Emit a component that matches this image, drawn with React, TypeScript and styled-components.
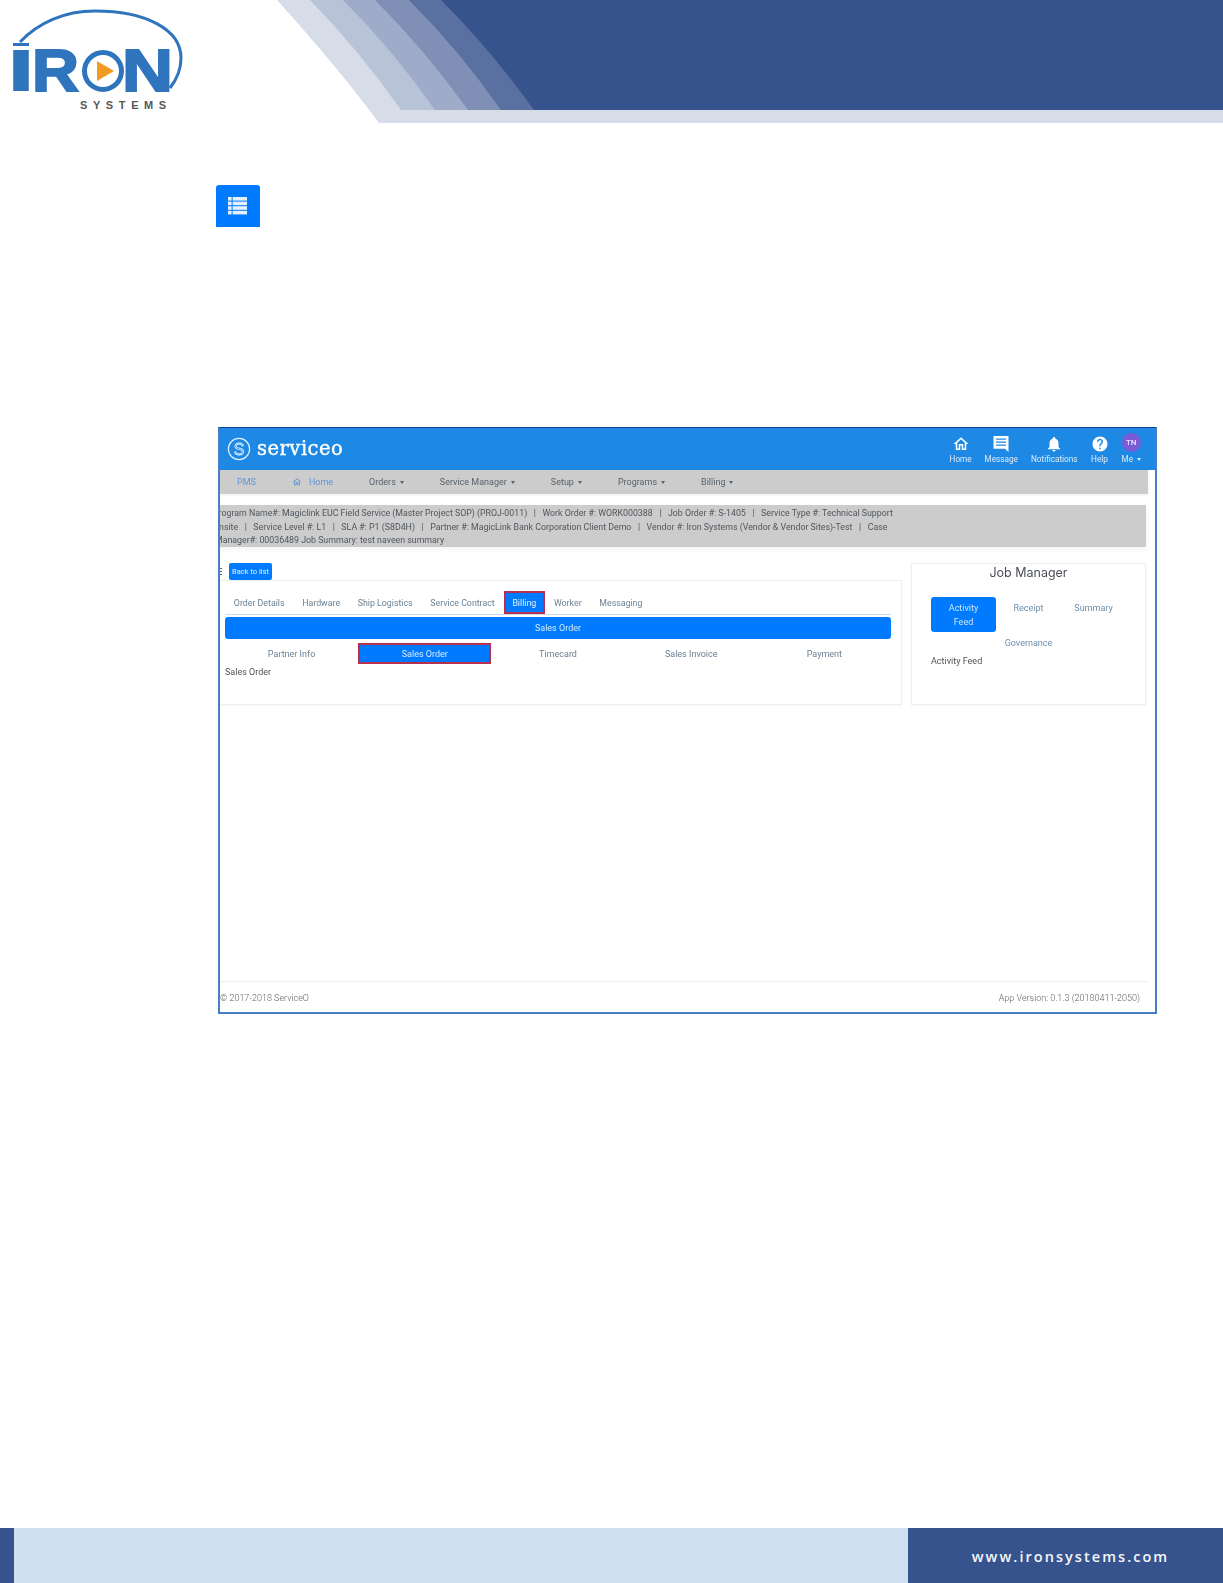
import React, { FC } from 'react';
import styled, { createGlobalStyle } from 'styled-components';
import { MdHelp, MdNotifications, MdOutlineHome } from 'react-icons/md';

const GlobalStyle = createGlobalStyle`
  html, body { margin: 0; padding: 0; background: #fff; }
  body { font-family: Roboto, "Liberation Sans", sans-serif; }
  * { box-sizing: border-box; }
`;

const Page = styled.div`
  width: 1223px;
  height: 1583px;
  display: flex;
  flex-direction: column;
  overflow: hidden;
`;

const Banner = styled.header`
  height: 123px;
  display: flex;
  justify-content: space-between;
  flex: none;
`;

const LogoArt = styled.svg`
  width: 200px;
  height: 123px;
  flex: none;
`;

const Swoosh = styled.svg`
  width: 948px;
  height: 123px;
  flex: none;
`;

const ListButton = styled.button`
  margin: 62px 0 0 216px;
  width: 44px;
  height: 42px;
  flex: none;
  border: none;
  border-radius: 3px 3px 0 0;
  background: #007bff;
  display: flex;
  align-items: center;
  justify-content: center;
  padding: 0 2px 0 0;
`;

const Frame = styled.section`
  margin: 200px 0 0 218px;
  width: 939px;
  height: 587px;
  flex: none;
  display: flex;
  flex-direction: column;
  overflow: hidden;
  border: 2px solid #4a7ec4;
  border-top: 1px solid #1b3f94;
  > * { filter: blur(0.35px); }
`;

const TopBar = styled.div`
  height: 42px;
  flex: none;
  background: #1e88e5;
  display: flex;
  align-items: center;
  justify-content: space-between;
  padding: 0 14px 0 7px;
  color: #fff;
`;

const Brand = styled.div`
  display: flex;
  align-items: center;
  gap: 6px;
`;

const BrandName = styled.span`
  font-family: "DejaVu Serif", "Liberation Serif", serif;
  font-size: 19.5px;
  letter-spacing: 0.5px;
  line-height: 24px;
  -webkit-text-stroke: 0.35px #fff;
`;

const Actions = styled.nav`
  display: flex;
  align-items: flex-end;
  gap: 13px;
`;

const Action = styled.div`
  display: flex;
  flex-direction: column;
  align-items: center;
  font-size: 8.2px;
  line-height: 12px;
  color: #dcecfb;
  white-space: nowrap;
  svg { display: block; color: #fff; }
`;

const Avatar = styled.span`
  width: 19px;
  height: 19px;
  border-radius: 50%;
  background: #7a5bd6;
  color: #e9e4ff;
  font-size: 8px;
  font-weight: 500;
  display: flex;
  align-items: center;
  justify-content: center;
  margin-bottom: 1px;
`;

const Menu = styled.nav`
  height: 24px;
  flex: none;
  margin-right: 7px;
  background: #cccccc;
  display: flex;
  align-items: center;
  gap: 36px;
  padding-left: 17px;
  box-shadow: 0 1px 3px rgba(0, 0, 0, 0.08);
`;

const MenuItem = styled.span<{ $link?: boolean }>`
  display: flex;
  align-items: center;
  gap: 7px;
  font-size: 9px;
  white-space: nowrap;
  color: ${props => (props.$link ? '#5f93d6' : '#59626b')};
`;

const Caret = styled.i`
  display: inline-block;
  margin-left: 4px;
  vertical-align: 1px;
  border-top: 3px solid currentColor;
  border-left: 2.5px solid transparent;
  border-right: 2.5px solid transparent;
`;

const Info = styled.div`
  height: 42px;
  flex: none;
  margin: 11px 9px 0 0;
  padding-top: 2px;
  background: #cccccc;
  overflow: hidden;
  box-shadow: 0 2px 6px rgba(0, 0, 0, 0.05);
`;

const InfoLine = styled.div<{ $shift: number }>`
  height: 13.5px;
  line-height: 13.5px;
  margin-left: ${props => props.$shift}px;
  font-size: 8.8px;
  color: #50575e;
  white-space: pre;
`;

const Workspace = styled.div`
  flex: none;
  height: 142px;
  margin: 16px 9px 0 0;
  display: flex;
  gap: 9px;
`;

const LeftColumn = styled.div`
  flex: 1;
  display: flex;
  flex-direction: column;
`;

const BackRow = styled.div`
  height: 17px;
  flex: none;
  display: flex;
  align-items: center;
  gap: 7px;
`;

const Burger = styled.span`
  width: 2px;
  height: 7px;
  background: repeating-linear-gradient(#5c6b7a 0 1px, transparent 1px 3px);
`;

const BackButton = styled.button`
  width: 43px;
  height: 17px;
  border: none;
  border-radius: 2px;
  background: #007bff;
  color: #eaf3ff;
  font: 400 7.5px Roboto, sans-serif;
  padding: 0;
`;

const Card = styled.div`
  background: #fff;
  border: 1px solid #eeeeee;
  border-left: none;
  box-shadow: 0 1px 3px rgba(0, 0, 0, 0.04);
`;

const OrderCard = styled(Card)`
  flex: 1;
  padding: 10px 10px 0 5px;
`;

const Tabs = styled.div`
  height: 24px;
  display: flex;
  border-bottom: 1px solid #c9dcec;
`;

const Tab = styled.span<{ $active?: boolean }>`
  height: 23px;
  padding: 0 8.85px;
  display: flex;
  align-items: center;
  font-size: 8.8px;
  white-space: nowrap;
  color: ${props => (props.$active ? '#e8f2ff' : '#6c8194')};
  background: ${props => (props.$active ? '#007bff' : 'transparent')};
  outline: ${props => (props.$active ? '2px solid #b9304f' : 'none')};
  outline-offset: -2px;
`;

const SectionBar = styled.div`
  height: 22px;
  margin-top: 2px;
  border-radius: 3px;
  background: #007bff;
  color: #d9eaff;
  font-size: 9px;
  display: flex;
  align-items: center;
  justify-content: center;
`;

const SubTabs = styled.div`
  margin-top: 4px;
  display: grid;
  grid-template-columns: repeat(5, 1fr);
`;

const SubTab = styled.span<{ $active?: boolean }>`
  height: 21px;
  font-size: 9px;
  display: flex;
  align-items: center;
  justify-content: center;
  color: ${props => (props.$active ? '#d9eaff' : '#6c8194')};
  background: ${props => (props.$active ? '#007bff' : 'transparent')};
  outline: ${props => (props.$active ? '2px solid #b9304f' : 'none')};
  outline-offset: -2px;
`;

const PaneText = styled.div`
  margin-top: 1px;
  font-size: 9px;
  line-height: 14px;
  color: #4d5358;
`;

const ManagerCard = styled(Card)`
  width: 235px;
  flex: none;
  border-left: 1px solid #eeeeee;
  padding: 0 19px 0;
`;

const ManagerTitle = styled.h3`
  margin: 0;
  font: 400 12.5px/17px Inter, "Open Sans", sans-serif;
  color: #4a4f55;
  text-align: center;
`;

const Pills = styled.div`
  margin-top: 16px;
  width: 195px;
  display: flex;
  flex-wrap: wrap;
  justify-content: center;
  row-gap: 0;
`;

const Pill = styled.span<{ $active?: boolean }>`
  width: 65px;
  padding: 4px 8px 3px;
  border-radius: 3px;
  font-size: 9px;
  line-height: 14px;
  text-align: center;
  color: ${props => (props.$active ? '#cfe4ff' : '#6c8fae')};
  background: ${props => (props.$active ? '#007bff' : 'transparent')};
`;

const WidePill = styled(Pill)`
  width: auto;
`;

const Foot = styled.footer`
  margin: auto 7px 0 0;
  height: 31px;
  flex: none;
  border-top: 1px solid #f0f0f0;
  display: flex;
  align-items: center;
  justify-content: space-between;
  padding: 2px 8px 0 0;
  font-size: 9px;
  font-weight: 300;
  color: #5e6468;
`;

const BottomStrip = styled.footer`
  margin-top: auto;
  height: 55px;
  flex: none;
  display: grid;
  grid-template-columns: 14px 1fr 315px;
`;

const StripEdge = styled.div`
  background: #36538d;
`;

const StripMiddle = styled.div`
  background: #cfe0f0;
`;

const StripSite = styled.div`
  background: #36538d;
  color: #f4f7fc;
  font: 600 14.5px "Open Sans", sans-serif;
  letter-spacing: 2.05px;
  display: flex;
  align-items: center;
  justify-content: center;
  padding: 2px 0 0 10px;
`;

const IronLogo: FC = () => (
  <LogoArt viewBox="0 0 200 123">
    <path d="M20 42C38 23 64 11 95 11c50 0 86 18 86 47 0 11-4 21-11 30" fill="none" stroke="#2f75bd" strokeWidth="3" />
    <rect x="13" y="43" width="16" height="3" fill="#2f75bd" />
    <g fill="#2f75bd" stroke="#2f75bd" fontFamily="Liberation Sans" fontWeight="700" fontSize="60">
      <text x="6" y="91" textLength="30" lengthAdjust="spacingAndGlyphs" stroke="none">I</text>
      <text x="32" y="91" strokeWidth="2" textLength="47" lengthAdjust="spacingAndGlyphs">R</text>
      <text x="122" y="91" strokeWidth="2" textLength="51" lengthAdjust="spacingAndGlyphs">N</text>
    </g>
    <circle cx="103" cy="71" r="18.5" fill="none" stroke="#2f75bd" strokeWidth="5" />
    <polygon points="97,61 114,71 97,81" fill="#f39a22" />
    <text x="80" y="109" fontFamily="Liberation Sans" fontWeight="700" fontSize="11" letterSpacing="5.6" fill="#55575a">SYSTEMS</text>
  </LogoArt>
);

const bands: { color: string; d: string }[] = [
  { color: '#d6dce8', d: 'M2 0Q65 70 104 123H948V0Z' },
  { color: '#b8c3d8', d: 'M35 0Q84 50 126 110H948V0Z' },
  { color: '#9eabc9', d: 'M68 0Q118 50 160 110H948V0Z' },
  { color: '#7f8fb6', d: 'M100 0Q150 50 193 110H948V0Z' },
  { color: '#5a70a0', d: 'M134 0Q184 50 226 110H948V0Z' },
  { color: '#36538d', d: 'M166 0Q216 50 259 110H948V0Z' },
];

const BannerArt: FC = () => (
  <Swoosh viewBox="0 0 948 123">
    {bands.map(band => (
      <path key={band.color} d={band.d} fill={band.color} />
    ))}
  </Swoosh>
);

const ServiceoMark: FC = () => (
  <svg width="24" height="24" viewBox="0 0 24 24">
    <circle cx="12" cy="12" r="10.6" fill="none" stroke="#dff0ff" strokeWidth="1.2" />
    <text x="12" y="17.5" textAnchor="middle" fontFamily="Liberation Sans" fontSize="16" fill="none" stroke="#dff0ff" strokeWidth="0.8">S</text>
  </svg>
);

const TableIcon: FC = () => (
  <svg width="19" height="18" viewBox="0 0 19 18" fill="#e6f1ff">
    {[0, 4.6, 9.2, 13.8].map(top => (
      <g key={top}>
        <rect y={top} width="3.6" height="3.6" />
        <rect x="4.6" y={top} width="14.4" height="3.6" />
      </g>
    ))}
  </svg>
);

const MessageIcon: FC = () => (
  <svg width="18" height="18" viewBox="0 0 18 18">
    <path d="M1.5 1h15v16l-3.5-3.2H1.5z" fill="#fff" />
    <path d="M4 4.2h10M4 7.2h10M4 10.2h10" stroke="#1e88e5" strokeWidth="1.3" />
  </svg>
);

const tabs = ['Order Details', 'Hardware', 'Ship Logistics', 'Service Contract', 'Billing', 'Worker', 'Messaging'];
const subTabs = ['Partner Info', 'Sales Order', 'Timecard', 'Sales Invoice', 'Payment'];

export default function App() {
  return (
    <Page>
      <GlobalStyle />
      <Banner>
        <IronLogo />
        <BannerArt />
      </Banner>
      <ListButton>
        <TableIcon />
      </ListButton>
      <Frame>
        <TopBar>
          <Brand>
            <ServiceoMark />
            <BrandName>serviceo</BrandName>
          </Brand>
          <Actions>
            <Action><MdOutlineHome size={18} />Home</Action>
            <Action><MessageIcon />Message</Action>
            <Action><MdNotifications size={18} />Notifications</Action>
            <Action><MdHelp size={18} />Help</Action>
            <Action><Avatar>TN</Avatar><span>Me<Caret /></span></Action>
          </Actions>
        </TopBar>
        <Menu>
          <MenuItem $link>PMS</MenuItem>
          <MenuItem $link><MdOutlineHome size={10} />Home</MenuItem>
          <MenuItem><span>Orders<Caret /></span></MenuItem>
          <MenuItem><span>Service Manager<Caret /></span></MenuItem>
          <MenuItem><span>Setup<Caret /></span></MenuItem>
          <MenuItem><span>Programs<Caret /></span></MenuItem>
          <MenuItem><span>Billing<Caret /></span></MenuItem>
        </Menu>
        <Info>
          <InfoLine $shift={-7}>Program Name#: Magiclink EUC Field Service (Master Project SOP) (PROJ-0011)   |   Work Order #: WORK000388   |   Job Order #: S-1405   |   Service Type #: Technical Support</InfoLine>
          <InfoLine $shift={-7}>Onsite   |   Service Level #: L1   |   SLA #: P1 (S8D4H)   |   Partner #: MagicLink Bank Corporation Client Demo   |   Vendor #: Iron Systems (Vendor &amp; Vendor Sites)-Test   |   Case</InfoLine>
          <InfoLine $shift={-5}>Manager#: 00036489 Job Summary: test naveen summary</InfoLine>
        </Info>
        <Workspace>
          <LeftColumn>
            <BackRow>
              <Burger />
              <BackButton>Back to list</BackButton>
            </BackRow>
            <OrderCard>
              <Tabs>
                {tabs.map(tab => (
                  <Tab key={tab} $active={tab === 'Billing'}>{tab}</Tab>
                ))}
              </Tabs>
              <SectionBar>Sales Order</SectionBar>
              <SubTabs>
                {subTabs.map(tab => (
                  <SubTab key={tab} $active={tab === 'Sales Order'}>{tab}</SubTab>
                ))}
              </SubTabs>
              <PaneText>Sales Order</PaneText>
            </OrderCard>
          </LeftColumn>
          <ManagerCard>
            <ManagerTitle>Job Manager</ManagerTitle>
            <Pills>
              <Pill $active>Activity Feed</Pill>
              <Pill>Receipt</Pill>
              <Pill>Summary</Pill>
              <WidePill>Governance</WidePill>
            </Pills>
            <PaneText>Activity Feed</PaneText>
          </ManagerCard>
        </Workspace>
        <Foot>
          <span>© 2017-2018 ServiceO</span>
          <span>App Version: 0.1.3 (20180411-2050)</span>
        </Foot>
      </Frame>
      <BottomStrip>
        <StripEdge />
        <StripMiddle />
        <StripSite>www.ironsystems.com</StripSite>
      </BottomStrip>
    </Page>
  );
}
